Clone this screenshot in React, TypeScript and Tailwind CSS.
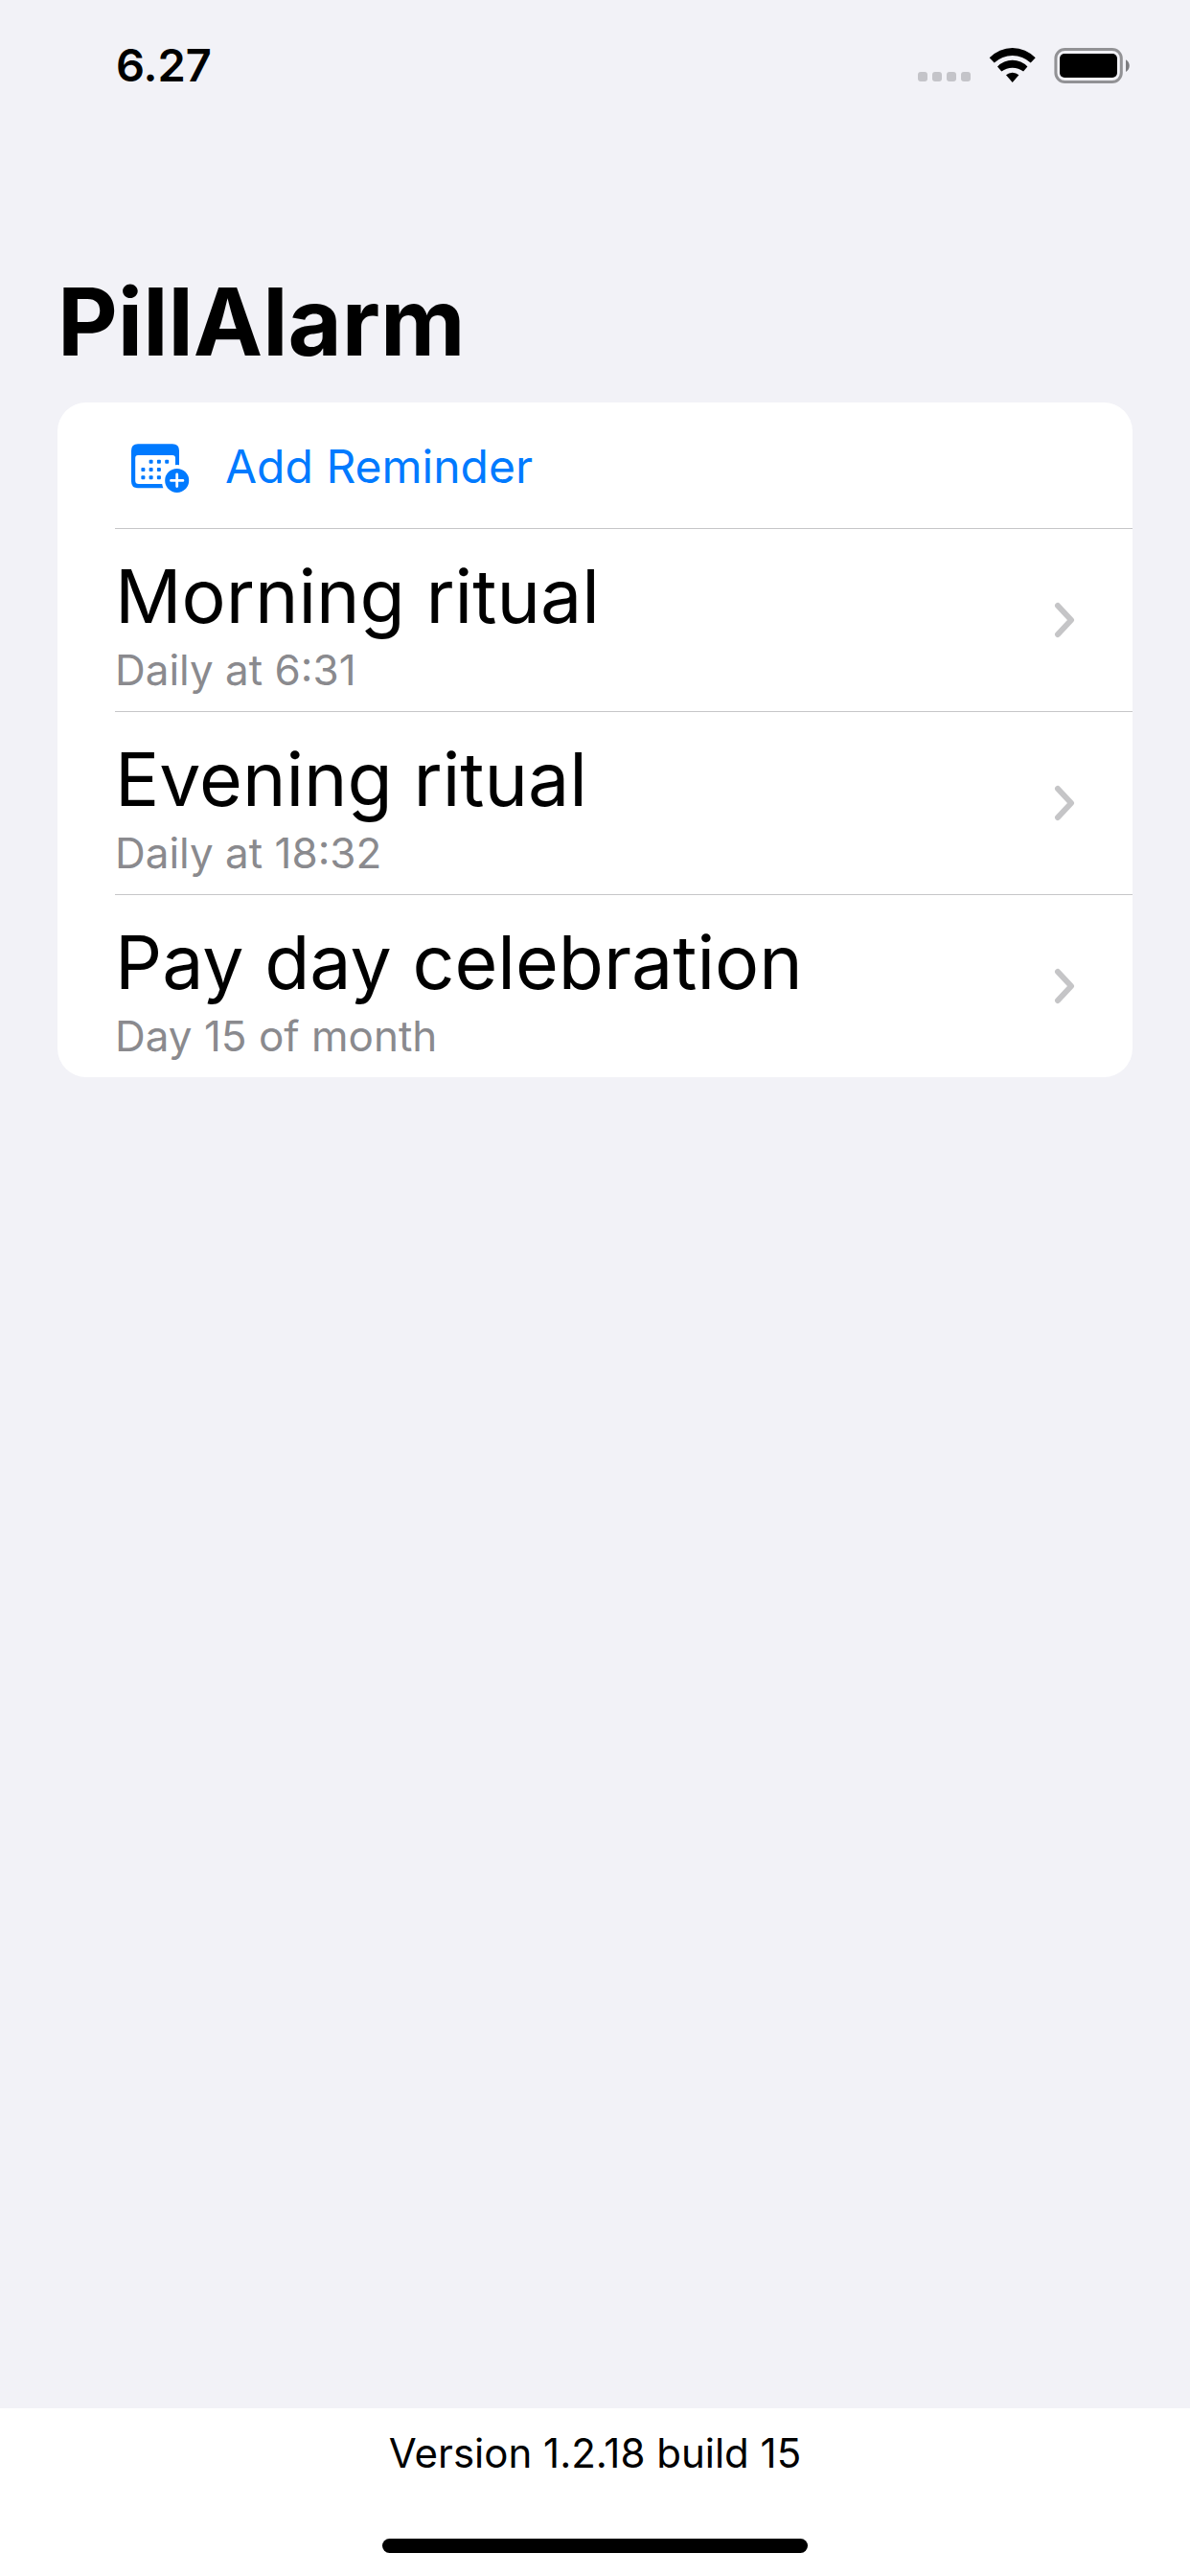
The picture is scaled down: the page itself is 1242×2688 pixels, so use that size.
const reminders = [
  { title: 'Morning ritual', schedule: 'Daily at 6:31' },
  { title: 'Evening ritual', schedule: 'Daily at 18:32' },
  { title: 'Pay day celebration', schedule: 'Day 15 of month' },
];

function WifiIcon() {
  return (
    <svg viewBox="0 0 50 38" className="h-[38px] w-[50px]" aria-hidden="true">
      <path d="M0.7 11.3A33 33 0 0 1 48.7 11.3L43.7 16.5A27.8 27.8 0 0 0 5.7 16.5Z" />
      <path d="M9 20.5A21.8 21.8 0 0 1 40.4 20.5L36.1 25.5A19 19 0 0 0 13.3 25.5Z" />
      <path d="M18 29.3A10 10 0 0 1 31.4 29.3L24.7 37Z" />
    </svg>
  );
}

function BatteryIcon() {
  return (
    <svg viewBox="0 0 80 38" className="h-[38px] w-[80px]" aria-hidden="true">
      <rect x="1.9" y="2.5" width="68.4" height="34" rx="9.5" fill="none" stroke="#929295" strokeWidth="3" />
      <rect x="6" y="7" width="60" height="25" rx="5" />
      <path d="M75 13.2C80 16 80 23.2 75 26Z" fill="#7d7d80" />
    </svg>
  );
}

function CalendarAddIcon() {
  const dots = [
    [20, 18.5], [28.3, 18.5], [36.6, 18.5],
    [11.8, 26.8], [20, 26.8], [28.3, 26.8],
    [11.8, 35], [20, 35], [28.3, 35],
  ];
  return (
    <svg viewBox="0 0 62 52" className="h-[52px] w-[62px]" fill="currentColor" aria-hidden="true">
      <path
        fillRule="evenodd"
        d="M7 0.2H43Q50 0.2 50 7.2V22.3Q47.9 21.9 46 22.2V15Q46 12 43 12H7Q4.2 12 4.2 15V38.5Q4.2 42 7.7 42H32.2Q32.4 44 33.4 46.2H7Q0 46.2 0 39.2V7.2Q0 0.2 7 0.2Z"
      />
      {dots.map(([x, y]) => (
        <rect key={`${x}-${y}`} x={x - 1.4} y={y - 1.8} width="4" height="4" rx="1" />
      ))}
      <path
        fillRule="evenodd"
        d="M47.7 25.9A12.5 12.5 0 1 1 47.7 50.9A12.5 12.5 0 1 1 47.7 25.9ZM46.3 32V37H41.5Q40.1 37 40.1 38.4T41.5 39.8H46.3V44.5Q46.3 45.9 47.7 45.9T49.1 44.5V39.8H53.9Q55.3 39.8 55.3 38.4T53.9 37H49.1V32Q49.1 30.6 47.7 30.6T46.3 32Z"
      />
    </svg>
  );
}

function ChevronIcon() {
  return (
    <svg viewBox="0 0 22 38" className="h-[38px] w-[22px]" fill="none" stroke="#c5c5c7" strokeWidth="6" strokeLinecap="round" strokeLinejoin="round" aria-hidden="true">
      <path d="M4 4L18 19L4 34" />
    </svg>
  );
}

function StatusBar() {
  return (
    <header className="flex h-[136px] items-center justify-between pr-[62px] pl-[121px]">
      <time className="text-[47px] leading-[56px] font-semibold">6.27</time>
      <div className="flex items-center">
        <div className="mr-[19px] flex gap-[5px] self-end pb-0.5">
          <span className="size-[10px] rounded-[3px] bg-[#c4c4c9]" />
          <span className="size-[10px] rounded-[3px] bg-[#c4c4c9]" />
          <span className="size-[10px] rounded-[3px] bg-[#c4c4c9]" />
          <span className="size-[10px] rounded-[3px] bg-[#c4c4c9]" />
        </div>
        <WifiIcon />
        <div className="ml-[18px]">
          <BatteryIcon />
        </div>
      </div>
    </header>
  );
}

export default function App() {
  return (
    <div className="flex min-h-screen flex-col bg-[#f2f2f7] font-[Inter,sans-serif] text-black">
      <StatusBar />
      <main className="flex-1 px-[60px] pt-[140px]">
        <h1 className="text-[97px] leading-[120px] font-bold">PillAlarm</h1>
        <section className="mt-6 overflow-hidden rounded-[30px] bg-white pl-[60px]">
          <button type="button" className="flex h-[132px] w-full items-center border-b border-[#c6c6c8] pt-1.5 pl-[17px] text-left text-[#007aff]">
            <CalendarAddIcon />
            <span className="ml-9 pb-1 text-[48px] leading-[60px]">Add Reminder</span>
          </button>
          <ul className="divide-y divide-[#c6c6c8]">
            {reminders.map((r) => (
              <li key={r.title}>
                <a href="#" className="flex h-[190px] items-center justify-between pr-[60px]">
                  <span className="flex flex-col pt-1">
                    <span className="text-[77px] leading-[100px]">{r.title}</span>
                    <span className="text-[44px] leading-[54px] text-[#8a8a8e]">{r.schedule}</span>
                  </span>
                  <ChevronIcon />
                </a>
              </li>
            ))}
          </ul>
        </section>
      </main>
      <footer className="flex flex-col items-center bg-white pt-5 pb-6">
        <p className="text-[42px] leading-[54px]">Version 1.2.18 build 15</p>
        <div className="mt-[62px] h-[15px] w-[444px] rounded-full bg-black" />
      </footer>
    </div>
  );
}
